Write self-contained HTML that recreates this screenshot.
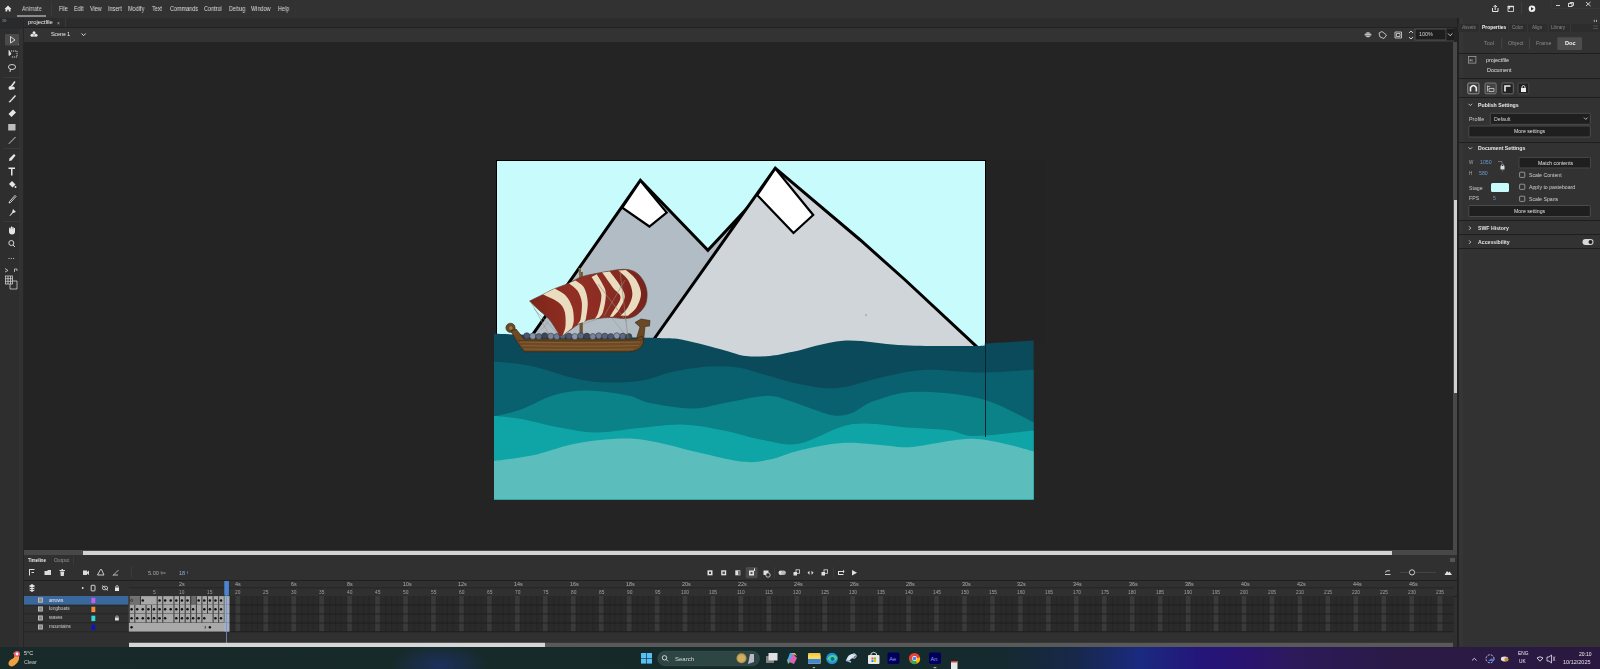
<!DOCTYPE html>
<html><head><meta charset="utf-8">
<style>
*{margin:0;padding:0;box-sizing:border-box}
html,body{width:1600px;height:669px;overflow:hidden;background:#232323;font-family:"Liberation Sans",sans-serif;color:#ddd}
.a{position:absolute}
.t{position:absolute;white-space:nowrap;line-height:1;color:#d8d8d8;will-change:transform}
svg{position:absolute;left:0;top:0;overflow:visible}
</style></head><body>
<div class="a" style="left:0px;top:0px;width:1600px;height:18px;background:#323232;"></div>
<div class="a" style="left:0px;top:18px;width:23px;height:629px;background:#2e2e2e;"></div>
<div class="a" style="left:19px;top:18px;width:4px;height:629px;background:#323232;"></div>
<div class="a" style="left:24px;top:18px;width:1434px;height:10px;background:#2c2c2c;"></div>
<div class="a" style="left:24px;top:27px;width:1434px;height:1px;background:#212121;"></div>
<div class="a" style="left:23px;top:18px;width:1px;height:629px;background:#262626;"></div>
<div class="a" style="left:24px;top:28px;width:1430px;height:14px;background:#333333;"></div>
<div class="a" style="left:24px;top:42px;width:1429px;height:508px;background:#242424;"></div>
<div class="a" style="left:1453px;top:42px;width:5px;height:508px;background:#484848;"></div>
<div class="a" style="left:1453.8px;top:200px;width:3.9px;height:193px;background:#d0d0d0;"></div>
<div class="a" style="left:24px;top:550px;width:1434px;height:5px;background:#484848;"></div>
<div class="a" style="left:83px;top:551px;width:1309px;height:4px;background:#d2d2d2;"></div>
<div class="a" style="left:24px;top:555px;width:1434px;height:92px;background:#303030;"></div>
<div class="a" style="left:1457px;top:18px;width:1.5px;height:629px;background:#222222;"></div>
<div class="a" style="left:1458.5px;top:18px;width:141.5px;height:629px;background:#323232;"></div>
<div class="a" style="left:1459px;top:18px;width:3.5px;height:629px;background:#353535;"></div>
<div class="a" style="left:0px;top:647px;width:1600px;height:22px;background:linear-gradient(90deg,#182a2a 0%,#152a28 40%,#142a2e 62.5%,#17284a 67.2%,#1a2a80 71.2%,#24157a 75%,#2a1470 78%,#2c1a5a 81%,#2a1a45 87.5%,#2a1840 100%);"></div>
<div class="a" style="left:380px;top:647px;width:120px;height:22px;background:radial-gradient(ellipse 50px 22px at 60px 18px,rgba(30,50,110,.75),rgba(30,50,110,0));"></div>
<svg width="1600" height="669"><path d="M4.5,9 L8,5.6 L11.5,9 L10.5,9 L10.5,11.5 L8.8,11.5 L8.8,9.8 L7.2,9.8 L7.2,11.5 L5.5,11.5 L5.5,9 Z" fill="#e6e6e6"/></svg>
<div class="a" style="left:17px;top:15px;width:29px;height:1.5px;background:#8a8a8a;"></div>
<div class="a" style="left:51px;top:2px;width:1px;height:14px;background:#3a3a3a;"></div>
<div class="a" style="left:295px;top:0px;width:1px;height:17px;background:#333;"></div>
<svg width="1600" height="669">
<g fill="none" stroke="#e8e8e8" stroke-width="1">
<path d="M1492.5,8 L1492.5,11.5 L1498,11.5 L1498,8"/>
<path d="M1495.2,10 L1495.2,5.5 M1493.5,7 L1495.2,5.3 L1497,7"/>
<rect x="1508" y="6.5" width="5.5" height="5" stroke-width="0.8"/>
</g>
<rect x="1507.8" y="5.8" width="6" height="1.4" fill="#e8e8e8"/><rect x="1508.5" y="7" width="1.3" height="2" fill="#e8e8e8"/>
<rect x="1521.3" y="2" width="0.8" height="12" fill="#444"/>
<circle cx="1532" cy="8.8" r="3.3" fill="#f0f0f0"/>
<path d="M1531,7 L1533.8,8.8 L1531,10.6 Z" fill="#2a2a2a"/>
<g stroke="#cfcfcf" stroke-width="1" fill="none">
<path d="M1556,5.5 L1560,5.5"/>
<rect x="1568.5" y="3.5" width="3.5" height="3"/>
<path d="M1570,3.5 L1570,2.5 L1573.5,2.5 L1573.5,5.5 L1572,5.5"/>
<path d="M1586,2 L1590.5,6 M1590.5,2 L1586,6"/>
</g>
<path d="M1551,0.5 L1551,8.5 L1600,8.5" fill="none" stroke="#3a3a3a" stroke-width="0.8"/>
</svg>
<div class="a" style="left:24px;top:18px;width:41px;height:9px;background:#2c2c2c;"></div>
<div class="a" style="left:65px;top:18px;width:1px;height:9px;background:#3a3a3a;"></div>
<svg width="1600" height="669">
<g fill="#e8e8e8">
<circle cx="34" cy="32.8" r="1.5"/><circle cx="32" cy="35.2" r="1.5"/><circle cx="36" cy="35.2" r="1.5"/>
<rect x="33.5" y="34" width="1" height="3"/>
</g>
<path d="M81.5,33.5 L83.6,35.6 L85.7,33.5" fill="none" stroke="#ddd" stroke-width="1"/>
</svg>
<svg width="1600" height="669">
<rect x="1415" y="29" width="31" height="11" fill="#1e1e1e" stroke="#5a5a5a" stroke-width="0.8"/>
<rect x="1446.4" y="29" width="7.6" height="11" fill="#1e1e1e"/>
<g stroke="#dcdcdc" stroke-width="0.9" fill="none">
<path d="M1364.5,34.7 L1371.5,34.7 M1368,32 L1368,37.5"/>
<path d="M1366,33 L1370,33 L1370,36.5 L1366,36.5 Z" stroke-width="0.7"/>
<path d="M1379,33 L1382,31.5 L1386.5,35 L1384,38.5 L1380,37 Z" stroke-width="0.8"/>
<path d="M1395,32 L1401.5,32 L1401.5,38 L1395,38 Z M1396.5,33.5 L1400,33.5 L1400,36.5 L1396.5,36.5 Z" stroke-width="0.8"/>
<path d="M1409,33 L1411,31 L1413,33 M1409,37 L1411,39 L1413,37"/>
<path d="M1448,33.5 L1450.2,35.7 L1452.4,33.5"/>
</g>
</svg>
<svg width="1600" height="669">
<rect x="0" y="18" width="23" height="11" fill="#282a2c"/><g fill="#d8d8d8">
<path d="M2.5,19 L4,20.5 L2.5,22 M4.5,19 L6,20.5 L4.5,22" stroke="#bbb" stroke-width="0.6" fill="none"/>
</g>
<rect x="5" y="34" width="14" height="11.5" rx="1" fill="#4a4a4a"/>
<path d="M10.5,36.5 L10.5,43 L15,40 Z" fill="none" stroke="#e0e0e0" stroke-width="0.9"/>
<path d="M18,44 L19,44 L19,45" fill="#aaa"/>
<g fill="none" stroke="#e0e0e0" stroke-width="0.9">
<path d="M9,50.5 L9,55.5 L11,54 Z" fill="#e0e0e0"/>
<path d="M11,51 L17,51 L17,57 L11,57" stroke-dasharray="1.2,0.8"/>
<ellipse cx="12" cy="67" rx="3.6" ry="2.5"/>
<path d="M10.5,69 L10,72"/>
<path d="M8.8,143.8 L15.5,137"/>
</g>
<rect x="3" y="77" width="17" height="0.8" fill="#3c3c3c"/>
<g fill="#e6e6e6">
<path d="M14.5,81 L15.5,82 L12,87 L10.5,86 Z"/><circle cx="10.5" cy="88" r="2"/><circle cx="13.2" cy="88" r="1.6"/>
<path d="M15,95 L16,96 L12,100.5 L11,99.5 Z"/><path d="M11,99.5 L12,100.5 L10,102.5 L8.5,102 Z"/>
<path d="M13,109.5 L16,112.5 L11.5,117 L8.5,114 Z"/>
<rect x="8.2" y="124" width="7.3" height="6.5" fill="#bdbdbd"/>
</g>
<rect x="3" y="148" width="17" height="0.8" fill="#3c3c3c"/>
<g fill="#e6e6e6">
<path d="M14,154 L15.5,155.5 L11.5,160.5 L9,161 L9.5,158.5 Z"/>
<path d="M8.5,167.5 L15,167.5 L15,169 L12.5,169 L12.5,175.5 L11,175.5 L11,169 L8.5,169 Z"/>
<path d="M9,184 L12,181 L15.5,184.5 L12.5,187.5 Z"/><circle cx="15.5" cy="187" r="1"/>
<path d="M15,195.5 L16,196.5 L10.5,202.5 L9,203 L9.5,201.5 Z" fill="none" stroke="#e6e6e6" stroke-width="0.9"/>
<path d="M13,209 L16,212 L13,213 L10,216 L9.5,215.5 L12,212.5 Z"/>
</g>
<rect x="3" y="221" width="17" height="0.8" fill="#3c3c3c"/>
<g fill="#e6e6e6">
<path d="M9,229 L9,231.5 Q9,234.5 12,234.5 Q15,234.5 15,231.5 L15,228 L14,228 L14,230 L13.5,227 L12.5,227 L12.5,230 L12,226.5 L11,226.5 L11,230 L10.5,227.5 L9.5,227.5 Z"/>
</g>
<g fill="none" stroke="#e6e6e6" stroke-width="0.9">
<circle cx="11.3" cy="243" r="2.5"/><path d="M13,245 L15,247"/>
</g>
<g fill="#d0d0d0"><circle cx="9" cy="258.5" r="0.6"/><circle cx="11.3" cy="258.5" r="0.6"/><circle cx="13.6" cy="258.5" r="0.6"/></g>
<g fill="none" stroke="#d0d0d0" stroke-width="0.8">
<path d="M5,268.5 L8,270.5 L5,272"/><path d="M14.5,272 L14.5,269 L17,269 L17,271"/>
<rect x="5.5" y="276" width="7" height="8"/><path d="M5.5,278.7 L12.5,278.7 M5.5,281.3 L12.5,281.3 M8,276 L8,284 M10.5,276 L10.5,284"/>
<path d="M10,284 L10,289 L17,289 L17,281 L12.5,281"/>
</g>
</svg>
<svg width="1600" height="669"><rect x="496" y="160" width="490" height="300" fill="#000"/><rect x="497" y="161" width="488" height="300" fill="#c8fbfc"/><polygon points="501,380 640.4,180.3 707.9,250.3 740.3,215.6 640,380" fill="#b1bcc4" stroke="#000" stroke-width="3" stroke-linejoin="miter" stroke-miterlimit="10"/><polygon points="622.3,207.6 640.4,180.8 666.7,212.5 649.4,226.5" fill="#fff" stroke="#000" stroke-width="2.2" stroke-linejoin="miter"/><polygon points="610.8,400 775.3,168.1 860.3,240 905.2,280 975.3,345.3 1004,372" fill="#d0d5da" stroke="#000" stroke-width="3" stroke-linejoin="miter" stroke-miterlimit="10"/><polygon points="757.3,195.2 775.3,168.6 813.2,215 793.5,233" fill="#fff" stroke="#000" stroke-width="2.2" stroke-linejoin="miter"/><rect x="865.5" y="314.5" width="1" height="1" fill="#555"/><rect x="986" y="160" width="60" height="190" fill="#232323"/><path d="M494.0,333.8 C505.0,334.1 533.0,334.8 560.0,335.5 C587.0,336.2 635.2,337.3 655.8,338.0 C676.4,338.7 672.0,337.8 683.5,339.9 C695.0,342.0 714.6,347.7 725.0,350.4 C735.4,353.1 738.5,355.1 746.0,356.0 C753.5,356.9 762.2,356.6 770.0,355.9 C777.8,355.2 780.8,354.3 793.0,351.8 C805.2,349.3 825.5,341.9 843.0,340.7 C860.5,339.5 881.8,344.0 898.0,344.9 C914.2,345.8 927.1,345.8 940.0,346.0 C952.9,346.2 968.1,346.1 975.6,346.0 C983.1,345.9 983.3,345.6 985.0,345.2 C986.7,344.8 981.8,344.1 986.0,343.6 C990.2,343.1 1002.1,342.5 1010.0,342.0 C1017.9,341.5 1029.7,340.7 1033.6,340.4  L1033.6,499.5 L494,499.5 Z" fill="#0b4a5a"/><path d="M494.0,361.5 C500.2,362.2 518.3,363.2 531.5,366.0 C544.7,368.8 560.6,375.2 573.0,378.0 C585.4,380.8 594.5,382.1 606.0,382.5 C617.5,382.9 631.0,382.2 642.0,380.5 C653.0,378.8 660.8,374.3 672.0,372.0 C683.2,369.7 698.0,367.3 709.0,366.6 C720.0,365.9 728.6,366.2 738.0,367.6 C747.4,369.0 754.9,372.2 765.5,375.0 C776.1,377.8 789.5,382.3 801.5,384.5 C813.5,386.7 823.6,389.3 837.4,388.0 C851.2,386.7 869.7,379.7 884.4,376.7 C899.1,373.7 909.7,370.5 925.8,369.8 C941.9,369.1 963.0,372.5 981.0,372.5 C999.0,372.5 1024.8,370.2 1033.6,369.8  L1033.6,499.5 L494,499.5 Z" fill="#09606f"/><path d="M494.0,416.5 C498.5,415.3 511.2,413.0 521.0,409.5 C530.8,406.0 541.8,398.7 552.8,395.5 C563.8,392.3 574.2,390.5 586.7,390.5 C599.2,390.5 617.5,393.4 628.0,395.5 C638.5,397.6 639.3,400.8 650.0,403.0 C660.7,405.2 679.7,408.5 692.0,408.5 C704.3,408.5 711.5,405.3 723.7,403.2 C736.0,401.1 754.5,396.3 765.5,395.9 C776.5,395.5 782.4,398.9 790.0,401.0 C797.6,403.1 803.7,406.1 811.0,408.5 C818.3,410.9 827.2,414.8 834.0,415.5 C840.8,416.2 845.4,415.4 852.0,413.0 C858.6,410.6 863.1,404.6 873.7,401.0 C884.3,397.4 897.6,392.1 915.5,391.7 C933.4,391.3 961.3,393.7 981.0,398.8 C1000.7,403.9 1024.8,418.4 1033.6,422.3  L1033.6,499.5 L494,499.5 Z" fill="#0a8287"/><path d="M494.0,415.8 C498.6,416.3 511.6,417.3 521.4,419.0 C531.2,420.7 540.6,423.9 552.8,426.2 C565.0,428.4 580.7,432.1 594.6,432.5 C608.5,432.9 621.9,429.6 636.4,428.3 C650.9,427.0 667.2,424.1 681.8,424.5 C696.3,424.9 709.8,427.7 723.7,430.4 C737.7,433.1 752.8,438.3 765.5,440.5 C778.2,442.7 785.5,446.2 800.0,443.5 C814.5,440.8 834.1,426.7 852.8,424.1 C871.5,421.5 895.8,426.8 912.0,427.8 C928.2,428.9 939.4,429.0 950.0,430.4 C960.6,431.8 961.7,436.0 975.6,436.0 C989.5,436.0 1023.9,431.5 1033.6,430.6  L1033.6,499.5 L494,499.5 Z" fill="#0fa5a7"/><path d="M494.0,461.0 C500.3,460.1 518.5,458.4 531.8,455.6 C545.1,452.8 559.8,446.8 573.7,444.0 C587.7,441.2 602.8,439.3 615.5,438.8 C628.2,438.3 635.5,438.5 650.0,440.9 C664.5,443.3 687.0,449.9 702.8,453.4 C718.6,456.9 733.4,460.8 744.6,461.8 C755.8,462.8 760.8,461.5 770.0,459.6 C779.2,457.7 788.0,453.1 800.0,450.3 C812.0,447.5 828.1,443.8 842.3,443.0 C856.5,442.2 873.4,444.8 885.0,445.5 C896.6,446.2 896.9,448.1 912.0,447.0 C927.1,445.9 955.3,438.2 975.6,438.9 C995.9,439.6 1023.9,449.2 1033.6,451.3  L1033.6,499.5 L494,499.5 Z" fill="#5bbebd"/><line x1="985.5" y1="344" x2="985.5" y2="437" stroke="#06262c" stroke-width="1"/><g><g stroke="#9a9a8a" stroke-width="0.6" fill="none"><path d="M531,302 L551,338 M534,309 L562,338 M541,330 L548,322 M583,324 L604,317 M611,317 L628,338"/></g><path d="M579.5,272 L582.8,272 L582.8,340 L579.5,340 Z" fill="#6a5232"/><path d="M578.5,268 L580.8,268 L581.5,278 L579.2,278Z" fill="#7a6a4a"/><path d="M636,340 L640,327 L635,322.5 L641,319 L650,320.5 L649.5,326 L645,326.5 L643.5,341 Z" fill="#6a4a26" stroke="#3a2410" stroke-width="0.6"/><circle cx="510.5" cy="327.8" r="4.6" fill="#6a4a26" stroke="#3a2410" stroke-width="0.6"/><circle cx="510.8" cy="328" r="1.8" fill="#9a7a50"/><path d="M511,331 L516,329 L524,339 L636,339 L642,336 L643.5,341 C643,347 639,351 629,351.8 L525,351.8 C521,349 515,339 511,331 Z" fill="#6e4a24" stroke="#3a2410" stroke-width="0.7"/><path d="M520,342 C560,343 600,343 640,342 M522,345.5 C560,346.5 600,346.5 639,345.5 M524,349 C560,349.8 600,349.8 634,349" stroke="#8e6a3e" stroke-width="0.7" fill="none"/><path d="M518,340.5 C560,341 610,341 642,340" stroke="#4a2e14" stroke-width="0.7" fill="none"/><circle cx="526.8" cy="335.8" r="3.1" fill="#4a5870" stroke="#2e3038" stroke-width="0.5"/><circle cx="532.8" cy="336.2" r="3.1" fill="#8a96a8" stroke="#2e3038" stroke-width="0.5"/><circle cx="538.8" cy="336.59999999999997" r="3.1" fill="#5a6a80" stroke="#2e3038" stroke-width="0.5"/><circle cx="544.8" cy="335.8" r="3.1" fill="#3e4656" stroke="#2e3038" stroke-width="0.5"/><circle cx="550.8" cy="336.2" r="3.1" fill="#7a8494" stroke="#2e3038" stroke-width="0.5"/><circle cx="556.8" cy="336.59999999999997" r="3.1" fill="#6d7c94" stroke="#2e3038" stroke-width="0.5"/><circle cx="562.8" cy="335.8" r="3.1" fill="#56647a" stroke="#2e3038" stroke-width="0.5"/><circle cx="568.8" cy="336.2" r="3.1" fill="#4a5870" stroke="#2e3038" stroke-width="0.5"/><circle cx="574.8" cy="336.59999999999997" r="3.1" fill="#8a96a8" stroke="#2e3038" stroke-width="0.5"/><circle cx="580.8" cy="335.8" r="3.1" fill="#5a6a80" stroke="#2e3038" stroke-width="0.5"/><circle cx="586.8" cy="336.2" r="3.1" fill="#3e4656" stroke="#2e3038" stroke-width="0.5"/><circle cx="592.8" cy="336.59999999999997" r="3.1" fill="#7a8494" stroke="#2e3038" stroke-width="0.5"/><circle cx="598.8" cy="335.8" r="3.1" fill="#6d7c94" stroke="#2e3038" stroke-width="0.5"/><circle cx="604.8" cy="336.2" r="3.1" fill="#56647a" stroke="#2e3038" stroke-width="0.5"/><circle cx="610.8" cy="336.59999999999997" r="3.1" fill="#4a5870" stroke="#2e3038" stroke-width="0.5"/><circle cx="616.8" cy="335.8" r="3.1" fill="#8a96a8" stroke="#2e3038" stroke-width="0.5"/><circle cx="622.8" cy="336.2" r="3.1" fill="#5a6a80" stroke="#2e3038" stroke-width="0.5"/><circle cx="628.8" cy="336.59999999999997" r="3.1" fill="#3e4656" stroke="#2e3038" stroke-width="0.5"/><defs><linearGradient id="sg" x1="0" y1="0" x2="1" y2="0"><stop offset="0" stop-color="#7c2419"/><stop offset="0.35" stop-color="#922f24"/><stop offset="0.7" stop-color="#8a2b22"/><stop offset="1" stop-color="#76231c"/></linearGradient></defs><path d="M529.6,301.0 C532.0,299.8 540.0,296.0 544.0,294.0 C548.0,292.0 549.6,290.8 553.8,289.0 C557.9,287.2 564.4,285.2 568.9,283.2 C573.4,281.2 576.5,278.6 581.0,277.0 C585.5,275.4 591.2,274.5 596.0,273.5 C600.8,272.5 606.0,271.7 610.0,271.0 C614.0,270.3 616.7,269.7 620.0,269.5 C623.3,269.3 627.0,269.2 630.0,270.0 C633.0,270.8 635.7,272.0 638.0,274.0 C640.3,276.0 642.5,279.0 644.0,282.0 C645.5,285.0 646.7,288.5 647.0,292.0 C647.3,295.5 647.0,299.8 646.0,303.0 C645.0,306.2 643.0,308.8 641.0,311.0 C639.0,313.2 636.7,315.2 634.0,316.5 C631.3,317.8 628.8,318.3 625.0,318.5 C621.2,318.7 615.7,317.5 611.0,317.5 C606.3,317.5 600.8,318.1 597.0,318.5 C593.2,318.9 591.4,318.9 588.3,319.8 C585.2,320.7 581.5,322.5 578.6,324.1 C575.7,325.7 574.0,327.5 571.0,329.5 C568.0,331.5 562.4,335.5 560.3,336.0 C558.1,336.5 559.9,335.4 558.1,332.7 C556.3,330.0 552.9,323.8 549.5,319.8 C546.1,315.9 539.7,310.8 537.7,309.0 Z" fill="url(#sg)" stroke="#5a4030" stroke-width="0.7"/><path d="M543.0,294.5 C545.5,295.8 554.4,299.2 558.0,302.0 C561.6,304.8 563.2,307.0 564.5,311.0 C565.8,315.0 565.8,321.9 565.5,326.0 C565.2,330.1 563.0,333.9 562.5,335.5  L572.0,328.0 C572.3,326.7 573.8,323.5 573.8,320.0 C573.8,316.5 573.6,311.1 572.2,307.0 C570.8,302.9 568.5,298.6 565.6,295.5 C562.7,292.4 556.6,289.7 554.8,288.5 Z" fill="#eadcbf"/><path d="M568.9,283.2 C570.3,284.5 575.4,287.6 577.5,290.8 C579.6,294.0 581.3,298.0 581.8,302.6 C582.3,307.2 581.4,315.1 580.7,318.7 C580.0,322.3 578.0,323.2 577.5,324.1  L584.0,322.0 C584.4,321.3 585.5,321.1 586.1,317.7 C586.7,314.3 588.1,306.5 587.7,301.5 C587.4,296.5 586.0,291.0 584.0,287.5 C582.0,284.0 576.8,281.7 575.4,280.5 Z" fill="#eadcbf"/><path d="M591.5,276.9 C592.9,279.2 598.5,287.1 600.1,290.9 C601.7,294.7 601.5,295.7 601.1,299.5 C600.7,303.3 599.0,310.3 597.9,313.5 C596.8,316.7 595.2,318.0 594.7,318.9  L599.0,317.8 C599.6,316.9 601.7,315.4 602.8,312.4 C603.9,309.3 605.1,303.4 605.5,299.5 C605.9,295.6 606.4,293.0 604.9,288.8 C603.4,284.6 598.1,276.6 596.8,274.2 Z" fill="#eadcbf"/><path d="M602.2,272.6 C604.0,275.1 610.0,283.6 613.0,287.7 C616.0,291.8 620.5,293.4 620.5,297.4 C620.5,301.3 614.8,308.2 613.0,311.4 C611.2,314.6 610.3,315.8 609.8,316.7  L613.0,316.7 C614.1,315.4 617.4,312.6 619.4,309.2 C621.4,305.8 624.8,300.4 624.8,296.3 C624.8,292.2 621.9,288.6 619.4,284.5 C616.9,280.4 611.4,273.7 609.8,271.5 Z" fill="#eadcbf"/><path d="M618.4,270.5 C620.0,272.1 625.8,276.2 628.1,280.1 C630.4,284.0 632.4,289.6 632.4,294.1 C632.4,298.6 630.1,303.5 628.1,307.1 C626.1,310.7 621.8,314.3 620.5,315.7  L628.1,315.7 C629.5,314.3 634.6,310.9 636.7,307.1 C638.9,303.3 641.2,297.8 641.0,293.1 C640.8,288.4 638.1,283.0 635.6,279.1 C633.1,275.2 627.5,271.4 625.9,269.9 Z" fill="#eadcbf"/><g stroke="#8a8a7a" stroke-width="0.6" fill="none"><path d="M598,284 L627,322 M625,280 L604,316 M620,271 L628,338"/></g></g></svg>
<div class="a" style="left:73px;top:556px;width:1px;height:9px;background:#3a3a3a;"></div>
<div class="a" style="left:131px;top:566px;width:0.6px;height:12px;background:#3a3a3a;"></div>
<div class="a" style="left:773.8px;top:567px;width:0.6px;height:11px;background:#3a3a3a;"></div>
<div class="a" style="left:832.9px;top:567px;width:0.6px;height:11px;background:#3a3a3a;"></div>
<div class="a" style="left:24px;top:580px;width:1433px;height:0.8px;background:#1f1f1f;"></div>
<div class="a" style="left:24px;top:595.5px;width:1433px;height:0.8px;background:#1f1f1f;"></div>
<div class="a" style="left:24.4px;top:596.1px;width:104px;height:8.6px;background:#3a679c;"></div>
<svg width="1600" height="669"><g fill="#dcdcdc" stroke="none">
<path d="M29,569 L30,569 L30,575.5 L29,575.5 Z M29,569 L34.5,569 L34.5,570 L29,570 Z M31.5,572 L34,572 L34,573 L31.5,573Z"/>
<path d="M44.5,571 L47,571 L48,570 L51,570 L51,575 L44.5,575 Z"/>
<path d="M59.5,570 L65,570 L65,571 L59.5,571Z M60.3,571.5 L64.2,571.5 L63.8,576 L60.7,576Z M61.5,569 L63,569 L63,570 L61.5,570Z"/>
<path d="M83,570.5 L87,570.5 L87,572 L89,570.5 L89,575 L87,573.5 L87,575 L83,575Z"/>
<path d="M100.5,569.5 L101.5,569.5 L104,575 L97.5,575 Z" fill="none" stroke="#dcdcdc" stroke-width="0.9"/>
<path d="M113,575.5 L118.5,570" stroke="#bbb" stroke-width="0.9" fill="none"/>
<rect x="113" y="574.5" width="5" height="1" fill="#bbb"/>
</g><rect x="745.7" y="567" width="11.8" height="11.3" rx="1.5" fill="#4a4a4a"/><g fill="#e0e0e0">
<rect x="707.5" y="570.3" width="5" height="5"/><rect x="709" y="571.8" width="2" height="2" fill="#333"/>
<rect x="721.2" y="570.3" width="5" height="5"/><rect x="722.5" y="571.6" width="2.4" height="2.4" fill="#555"/>
<rect x="735.3" y="570.3" width="5" height="5"/><rect x="738" y="570.8" width="2" height="4" fill="#777"/>
<rect x="749" y="570.5" width="5" height="5"/><rect x="750.5" y="572" width="2" height="2" fill="#555"/><path d="M754,568.5 L755,568 L755,571 L754,571Z"/>
<rect x="763.5" y="570.5" width="5" height="4.5"/><circle cx="768" cy="575" r="2.2" fill="#2c2c2c" stroke="#e0e0e0" stroke-width="0.8"/>
<ellipse cx="781" cy="572.7" rx="2.5" ry="2.3"/><ellipse cx="783.4" cy="572.7" rx="2.5" ry="2.3" fill="#bbb"/>
<rect x="793.5" y="572" width="3.5" height="3.5"/><rect x="796" y="569.8" width="3.5" height="3.5" fill="none" stroke="#e0e0e0" stroke-width="0.8"/>
<path d="M807.5,572.7 L809.5,570.7 L809.5,574.7 Z M813.5,572.7 L811.5,570.7 L811.5,574.7Z"/>
<rect x="821.5" y="572" width="3.5" height="3.5"/><rect x="824" y="569.8" width="3.5" height="3.5" fill="none" stroke="#e0e0e0" stroke-width="0.8"/>
<path d="M838,575 L838,571 L843,571 L843,569.5 L844.5,571.5 L843,573.5 L843,572 L839,572 L839,574 L843.5,574 L843.5,575 Z"/>
<path d="M852,570 L857,572.7 L852,575.4 Z"/>
</g><g fill="none" stroke="#dcdcdc" stroke-width="0.9">
<path d="M1385,574.5 L1390.5,574.5 M1385.5,572.5 L1386.5,570.8 L1390,570.8"/>
<line x1="1400" y1="572.4" x2="1436" y2="572.4" stroke="#555" stroke-width="0.6"/>
<circle cx="1412" cy="572.4" r="2.6" fill="#2c2c2c"/>
</g>
<path d="M1444.5,575 L1447,571 L1448.5,572.8 L1449.5,571.5 L1452,575Z" fill="#e0e0e0"/>
<rect x="1450" y="558" width="5" height="4" fill="#555"/><g fill="#e8e8e8">
<path d="M29.5,586 L32,584.5 L34.5,586 L32,587.5Z M29.5,588 L32,589.5 L34.5,588 M29.5,590 L32,591.5 L34.5,590" stroke="#e8e8e8" stroke-width="0.8"/>
<circle cx="82.7" cy="588" r="0.9"/>
<rect x="91.2" y="585.3" width="3.8" height="5.6" rx="0.6" fill="none" stroke="#e8e8e8" stroke-width="0.9"/>
<ellipse cx="105" cy="588" rx="2.8" ry="1.8" fill="none" stroke="#d8d8d8" stroke-width="0.8"/><path d="M102,585.5 L108,590.5" stroke="#d8d8d8" stroke-width="0.8"/>
<rect x="115" y="587.5" width="4" height="3.5"/><path d="M115.8,587.5 L115.8,586.3 Q117,584.7 118.2,586.3 L118.2,587.5" fill="none" stroke="#e8e8e8" stroke-width="0.8"/>
</g><rect x="128.8" y="587.6" width="1324.6000000000001" height="0.6" fill="#1f1f1f"/><rect x="128.80" y="588" width="0.6" height="7.5" fill="#3b3b3b"/><rect x="156.75" y="588" width="0.6" height="7.5" fill="#3b3b3b"/><rect x="184.70" y="588" width="0.6" height="7.5" fill="#3b3b3b"/><rect x="212.65" y="588" width="0.6" height="7.5" fill="#3b3b3b"/><rect x="240.60" y="588" width="0.6" height="7.5" fill="#3b3b3b"/><rect x="268.55" y="588" width="0.6" height="7.5" fill="#3b3b3b"/><rect x="296.50" y="588" width="0.6" height="7.5" fill="#3b3b3b"/><rect x="324.45" y="588" width="0.6" height="7.5" fill="#3b3b3b"/><rect x="352.40" y="588" width="0.6" height="7.5" fill="#3b3b3b"/><rect x="380.35" y="588" width="0.6" height="7.5" fill="#3b3b3b"/><rect x="408.30" y="588" width="0.6" height="7.5" fill="#3b3b3b"/><rect x="436.25" y="588" width="0.6" height="7.5" fill="#3b3b3b"/><rect x="464.20" y="588" width="0.6" height="7.5" fill="#3b3b3b"/><rect x="492.15" y="588" width="0.6" height="7.5" fill="#3b3b3b"/><rect x="520.10" y="588" width="0.6" height="7.5" fill="#3b3b3b"/><rect x="548.05" y="588" width="0.6" height="7.5" fill="#3b3b3b"/><rect x="576.00" y="588" width="0.6" height="7.5" fill="#3b3b3b"/><rect x="603.95" y="588" width="0.6" height="7.5" fill="#3b3b3b"/><rect x="631.90" y="588" width="0.6" height="7.5" fill="#3b3b3b"/><rect x="659.85" y="588" width="0.6" height="7.5" fill="#3b3b3b"/><rect x="687.80" y="588" width="0.6" height="7.5" fill="#3b3b3b"/><rect x="715.75" y="588" width="0.6" height="7.5" fill="#3b3b3b"/><rect x="743.70" y="588" width="0.6" height="7.5" fill="#3b3b3b"/><rect x="771.65" y="588" width="0.6" height="7.5" fill="#3b3b3b"/><rect x="799.60" y="588" width="0.6" height="7.5" fill="#3b3b3b"/><rect x="827.55" y="588" width="0.6" height="7.5" fill="#3b3b3b"/><rect x="855.50" y="588" width="0.6" height="7.5" fill="#3b3b3b"/><rect x="883.45" y="588" width="0.6" height="7.5" fill="#3b3b3b"/><rect x="911.40" y="588" width="0.6" height="7.5" fill="#3b3b3b"/><rect x="939.35" y="588" width="0.6" height="7.5" fill="#3b3b3b"/><rect x="967.30" y="588" width="0.6" height="7.5" fill="#3b3b3b"/><rect x="995.25" y="588" width="0.6" height="7.5" fill="#3b3b3b"/><rect x="1023.20" y="588" width="0.6" height="7.5" fill="#3b3b3b"/><rect x="1051.15" y="588" width="0.6" height="7.5" fill="#3b3b3b"/><rect x="1079.10" y="588" width="0.6" height="7.5" fill="#3b3b3b"/><rect x="1107.05" y="588" width="0.6" height="7.5" fill="#3b3b3b"/><rect x="1135.00" y="588" width="0.6" height="7.5" fill="#3b3b3b"/><rect x="1162.95" y="588" width="0.6" height="7.5" fill="#3b3b3b"/><rect x="1190.90" y="588" width="0.6" height="7.5" fill="#3b3b3b"/><rect x="1218.85" y="588" width="0.6" height="7.5" fill="#3b3b3b"/><rect x="1246.80" y="588" width="0.6" height="7.5" fill="#3b3b3b"/><rect x="1274.75" y="588" width="0.6" height="7.5" fill="#3b3b3b"/><rect x="1302.70" y="588" width="0.6" height="7.5" fill="#3b3b3b"/><rect x="1330.65" y="588" width="0.6" height="7.5" fill="#3b3b3b"/><rect x="1358.60" y="588" width="0.6" height="7.5" fill="#3b3b3b"/><rect x="1386.55" y="588" width="0.6" height="7.5" fill="#3b3b3b"/><rect x="1414.50" y="588" width="0.6" height="7.5" fill="#3b3b3b"/><rect x="38" y="597.6" width="4.8" height="5" fill="#c8c8c8"/><rect x="38.8" y="598.4" width="3.2" height="3.4" fill="#888"/><rect x="91.4" y="597.8000000000001" width="3.9" height="5.4" fill="#c85ee8"/><rect x="24" y="604.7" width="105" height="0.6" fill="#1f1f1f"/><rect x="38" y="606.5" width="4.8" height="5" fill="#c8c8c8"/><rect x="38.8" y="607.3" width="3.2" height="3.4" fill="#888"/><rect x="91.4" y="606.7" width="3.9" height="5.4" fill="#f08c3a"/><rect x="24" y="613.6" width="105" height="0.6" fill="#1f1f1f"/><rect x="38" y="615.5" width="4.8" height="5" fill="#c8c8c8"/><rect x="38.8" y="616.3" width="3.2" height="3.4" fill="#888"/><rect x="91.4" y="615.7" width="3.9" height="5.4" fill="#32d6de"/><rect x="24" y="622.6" width="105" height="0.6" fill="#1f1f1f"/><rect x="38" y="624.5" width="4.8" height="5" fill="#c8c8c8"/><rect x="38.8" y="625.3" width="3.2" height="3.4" fill="#888"/><rect x="91.4" y="624.7" width="3.9" height="5.4" fill="#1414b4"/><rect x="24" y="631.6" width="105" height="0.6" fill="#1f1f1f"/><rect x="115" y="617.5" width="3.8" height="3" fill="#ddd"/><path d="M115.8,617.5 L115.8,616.5 Q117,615 118.2,616.5 L118.2,617.5" fill="none" stroke="#ddd" stroke-width="0.7"/><rect x="128.8" y="596" width="1324.6000000000001" height="35.6" fill="#2a2a2a"/><rect x="151.16" y="596" width="5.59" height="35.6" fill="#3a3a3a"/><rect x="179.11" y="596" width="5.59" height="35.6" fill="#3a3a3a"/><rect x="207.06" y="596" width="5.59" height="35.6" fill="#3a3a3a"/><rect x="235.01" y="596" width="5.59" height="35.6" fill="#3a3a3a"/><rect x="262.96" y="596" width="5.59" height="35.6" fill="#3a3a3a"/><rect x="290.91" y="596" width="5.59" height="35.6" fill="#3a3a3a"/><rect x="318.86" y="596" width="5.59" height="35.6" fill="#3a3a3a"/><rect x="346.81" y="596" width="5.59" height="35.6" fill="#3a3a3a"/><rect x="374.76" y="596" width="5.59" height="35.6" fill="#3a3a3a"/><rect x="402.71" y="596" width="5.59" height="35.6" fill="#3a3a3a"/><rect x="430.66" y="596" width="5.59" height="35.6" fill="#3a3a3a"/><rect x="458.61" y="596" width="5.59" height="35.6" fill="#3a3a3a"/><rect x="486.56" y="596" width="5.59" height="35.6" fill="#3a3a3a"/><rect x="514.51" y="596" width="5.59" height="35.6" fill="#3a3a3a"/><rect x="542.46" y="596" width="5.59" height="35.6" fill="#3a3a3a"/><rect x="570.41" y="596" width="5.59" height="35.6" fill="#3a3a3a"/><rect x="598.36" y="596" width="5.59" height="35.6" fill="#3a3a3a"/><rect x="626.31" y="596" width="5.59" height="35.6" fill="#3a3a3a"/><rect x="654.26" y="596" width="5.59" height="35.6" fill="#3a3a3a"/><rect x="682.21" y="596" width="5.59" height="35.6" fill="#3a3a3a"/><rect x="710.16" y="596" width="5.59" height="35.6" fill="#3a3a3a"/><rect x="738.11" y="596" width="5.59" height="35.6" fill="#3a3a3a"/><rect x="766.06" y="596" width="5.59" height="35.6" fill="#3a3a3a"/><rect x="794.01" y="596" width="5.59" height="35.6" fill="#3a3a3a"/><rect x="821.96" y="596" width="5.59" height="35.6" fill="#3a3a3a"/><rect x="849.91" y="596" width="5.59" height="35.6" fill="#3a3a3a"/><rect x="877.86" y="596" width="5.59" height="35.6" fill="#3a3a3a"/><rect x="905.81" y="596" width="5.59" height="35.6" fill="#3a3a3a"/><rect x="933.76" y="596" width="5.59" height="35.6" fill="#3a3a3a"/><rect x="961.71" y="596" width="5.59" height="35.6" fill="#3a3a3a"/><rect x="989.66" y="596" width="5.59" height="35.6" fill="#3a3a3a"/><rect x="1017.61" y="596" width="5.59" height="35.6" fill="#3a3a3a"/><rect x="1045.56" y="596" width="5.59" height="35.6" fill="#3a3a3a"/><rect x="1073.51" y="596" width="5.59" height="35.6" fill="#3a3a3a"/><rect x="1101.46" y="596" width="5.59" height="35.6" fill="#3a3a3a"/><rect x="1129.41" y="596" width="5.59" height="35.6" fill="#3a3a3a"/><rect x="1157.36" y="596" width="5.59" height="35.6" fill="#3a3a3a"/><rect x="1185.31" y="596" width="5.59" height="35.6" fill="#3a3a3a"/><rect x="1213.26" y="596" width="5.59" height="35.6" fill="#3a3a3a"/><rect x="1241.21" y="596" width="5.59" height="35.6" fill="#3a3a3a"/><rect x="1269.16" y="596" width="5.59" height="35.6" fill="#3a3a3a"/><rect x="1297.11" y="596" width="5.59" height="35.6" fill="#3a3a3a"/><rect x="1325.06" y="596" width="5.59" height="35.6" fill="#3a3a3a"/><rect x="1353.01" y="596" width="5.59" height="35.6" fill="#3a3a3a"/><rect x="1380.96" y="596" width="5.59" height="35.6" fill="#3a3a3a"/><rect x="1408.91" y="596" width="5.59" height="35.6" fill="#3a3a3a"/><rect x="1436.86" y="596" width="5.59" height="35.6" fill="#3a3a3a"/><path d="M128.80,596 L128.80,631.6 M134.39,596 L134.39,631.6 M139.98,596 L139.98,631.6 M145.57,596 L145.57,631.6 M151.16,596 L151.16,631.6 M156.75,596 L156.75,631.6 M162.34,596 L162.34,631.6 M167.93,596 L167.93,631.6 M173.52,596 L173.52,631.6 M179.11,596 L179.11,631.6 M184.70,596 L184.70,631.6 M190.29,596 L190.29,631.6 M195.88,596 L195.88,631.6 M201.47,596 L201.47,631.6 M207.06,596 L207.06,631.6 M212.65,596 L212.65,631.6 M218.24,596 L218.24,631.6 M223.83,596 L223.83,631.6 M229.42,596 L229.42,631.6 M235.01,596 L235.01,631.6 M240.60,596 L240.60,631.6 M246.19,596 L246.19,631.6 M251.78,596 L251.78,631.6 M257.37,596 L257.37,631.6 M262.96,596 L262.96,631.6 M268.55,596 L268.55,631.6 M274.14,596 L274.14,631.6 M279.73,596 L279.73,631.6 M285.32,596 L285.32,631.6 M290.91,596 L290.91,631.6 M296.50,596 L296.50,631.6 M302.09,596 L302.09,631.6 M307.68,596 L307.68,631.6 M313.27,596 L313.27,631.6 M318.86,596 L318.86,631.6 M324.45,596 L324.45,631.6 M330.04,596 L330.04,631.6 M335.63,596 L335.63,631.6 M341.22,596 L341.22,631.6 M346.81,596 L346.81,631.6 M352.40,596 L352.40,631.6 M357.99,596 L357.99,631.6 M363.58,596 L363.58,631.6 M369.17,596 L369.17,631.6 M374.76,596 L374.76,631.6 M380.35,596 L380.35,631.6 M385.94,596 L385.94,631.6 M391.53,596 L391.53,631.6 M397.12,596 L397.12,631.6 M402.71,596 L402.71,631.6 M408.30,596 L408.30,631.6 M413.89,596 L413.89,631.6 M419.48,596 L419.48,631.6 M425.07,596 L425.07,631.6 M430.66,596 L430.66,631.6 M436.25,596 L436.25,631.6 M441.84,596 L441.84,631.6 M447.43,596 L447.43,631.6 M453.02,596 L453.02,631.6 M458.61,596 L458.61,631.6 M464.20,596 L464.20,631.6 M469.79,596 L469.79,631.6 M475.38,596 L475.38,631.6 M480.97,596 L480.97,631.6 M486.56,596 L486.56,631.6 M492.15,596 L492.15,631.6 M497.74,596 L497.74,631.6 M503.33,596 L503.33,631.6 M508.92,596 L508.92,631.6 M514.51,596 L514.51,631.6 M520.10,596 L520.10,631.6 M525.69,596 L525.69,631.6 M531.28,596 L531.28,631.6 M536.87,596 L536.87,631.6 M542.46,596 L542.46,631.6 M548.05,596 L548.05,631.6 M553.64,596 L553.64,631.6 M559.23,596 L559.23,631.6 M564.82,596 L564.82,631.6 M570.41,596 L570.41,631.6 M576.00,596 L576.00,631.6 M581.59,596 L581.59,631.6 M587.18,596 L587.18,631.6 M592.77,596 L592.77,631.6 M598.36,596 L598.36,631.6 M603.95,596 L603.95,631.6 M609.54,596 L609.54,631.6 M615.13,596 L615.13,631.6 M620.72,596 L620.72,631.6 M626.31,596 L626.31,631.6 M631.90,596 L631.90,631.6 M637.49,596 L637.49,631.6 M643.08,596 L643.08,631.6 M648.67,596 L648.67,631.6 M654.26,596 L654.26,631.6 M659.85,596 L659.85,631.6 M665.44,596 L665.44,631.6 M671.03,596 L671.03,631.6 M676.62,596 L676.62,631.6 M682.21,596 L682.21,631.6 M687.80,596 L687.80,631.6 M693.39,596 L693.39,631.6 M698.98,596 L698.98,631.6 M704.57,596 L704.57,631.6 M710.16,596 L710.16,631.6 M715.75,596 L715.75,631.6 M721.34,596 L721.34,631.6 M726.93,596 L726.93,631.6 M732.52,596 L732.52,631.6 M738.11,596 L738.11,631.6 M743.70,596 L743.70,631.6 M749.29,596 L749.29,631.6 M754.88,596 L754.88,631.6 M760.47,596 L760.47,631.6 M766.06,596 L766.06,631.6 M771.65,596 L771.65,631.6 M777.24,596 L777.24,631.6 M782.83,596 L782.83,631.6 M788.42,596 L788.42,631.6 M794.01,596 L794.01,631.6 M799.60,596 L799.60,631.6 M805.19,596 L805.19,631.6 M810.78,596 L810.78,631.6 M816.37,596 L816.37,631.6 M821.96,596 L821.96,631.6 M827.55,596 L827.55,631.6 M833.14,596 L833.14,631.6 M838.73,596 L838.73,631.6 M844.32,596 L844.32,631.6 M849.91,596 L849.91,631.6 M855.50,596 L855.50,631.6 M861.09,596 L861.09,631.6 M866.68,596 L866.68,631.6 M872.27,596 L872.27,631.6 M877.86,596 L877.86,631.6 M883.45,596 L883.45,631.6 M889.04,596 L889.04,631.6 M894.63,596 L894.63,631.6 M900.22,596 L900.22,631.6 M905.81,596 L905.81,631.6 M911.40,596 L911.40,631.6 M916.99,596 L916.99,631.6 M922.58,596 L922.58,631.6 M928.17,596 L928.17,631.6 M933.76,596 L933.76,631.6 M939.35,596 L939.35,631.6 M944.94,596 L944.94,631.6 M950.53,596 L950.53,631.6 M956.12,596 L956.12,631.6 M961.71,596 L961.71,631.6 M967.30,596 L967.30,631.6 M972.89,596 L972.89,631.6 M978.48,596 L978.48,631.6 M984.07,596 L984.07,631.6 M989.66,596 L989.66,631.6 M995.25,596 L995.25,631.6 M1000.84,596 L1000.84,631.6 M1006.43,596 L1006.43,631.6 M1012.02,596 L1012.02,631.6 M1017.61,596 L1017.61,631.6 M1023.20,596 L1023.20,631.6 M1028.79,596 L1028.79,631.6 M1034.38,596 L1034.38,631.6 M1039.97,596 L1039.97,631.6 M1045.56,596 L1045.56,631.6 M1051.15,596 L1051.15,631.6 M1056.74,596 L1056.74,631.6 M1062.33,596 L1062.33,631.6 M1067.92,596 L1067.92,631.6 M1073.51,596 L1073.51,631.6 M1079.10,596 L1079.10,631.6 M1084.69,596 L1084.69,631.6 M1090.28,596 L1090.28,631.6 M1095.87,596 L1095.87,631.6 M1101.46,596 L1101.46,631.6 M1107.05,596 L1107.05,631.6 M1112.64,596 L1112.64,631.6 M1118.23,596 L1118.23,631.6 M1123.82,596 L1123.82,631.6 M1129.41,596 L1129.41,631.6 M1135.00,596 L1135.00,631.6 M1140.59,596 L1140.59,631.6 M1146.18,596 L1146.18,631.6 M1151.77,596 L1151.77,631.6 M1157.36,596 L1157.36,631.6 M1162.95,596 L1162.95,631.6 M1168.54,596 L1168.54,631.6 M1174.13,596 L1174.13,631.6 M1179.72,596 L1179.72,631.6 M1185.31,596 L1185.31,631.6 M1190.90,596 L1190.90,631.6 M1196.49,596 L1196.49,631.6 M1202.08,596 L1202.08,631.6 M1207.67,596 L1207.67,631.6 M1213.26,596 L1213.26,631.6 M1218.85,596 L1218.85,631.6 M1224.44,596 L1224.44,631.6 M1230.03,596 L1230.03,631.6 M1235.62,596 L1235.62,631.6 M1241.21,596 L1241.21,631.6 M1246.80,596 L1246.80,631.6 M1252.39,596 L1252.39,631.6 M1257.98,596 L1257.98,631.6 M1263.57,596 L1263.57,631.6 M1269.16,596 L1269.16,631.6 M1274.75,596 L1274.75,631.6 M1280.34,596 L1280.34,631.6 M1285.93,596 L1285.93,631.6 M1291.52,596 L1291.52,631.6 M1297.11,596 L1297.11,631.6 M1302.70,596 L1302.70,631.6 M1308.29,596 L1308.29,631.6 M1313.88,596 L1313.88,631.6 M1319.47,596 L1319.47,631.6 M1325.06,596 L1325.06,631.6 M1330.65,596 L1330.65,631.6 M1336.24,596 L1336.24,631.6 M1341.83,596 L1341.83,631.6 M1347.42,596 L1347.42,631.6 M1353.01,596 L1353.01,631.6 M1358.60,596 L1358.60,631.6 M1364.19,596 L1364.19,631.6 M1369.78,596 L1369.78,631.6 M1375.37,596 L1375.37,631.6 M1380.96,596 L1380.96,631.6 M1386.55,596 L1386.55,631.6 M1392.14,596 L1392.14,631.6 M1397.73,596 L1397.73,631.6 M1403.32,596 L1403.32,631.6 M1408.91,596 L1408.91,631.6 M1414.50,596 L1414.50,631.6 M1420.09,596 L1420.09,631.6 M1425.68,596 L1425.68,631.6 M1431.27,596 L1431.27,631.6 M1436.86,596 L1436.86,631.6" stroke="#222" stroke-width="0.5" fill="none"/><rect x="128.8" y="604.6" width="1324.6000000000001" height="0.8" fill="#1c1c1c"/><rect x="128.8" y="613.6" width="1324.6000000000001" height="0.8" fill="#1c1c1c"/><rect x="128.8" y="622.6" width="1324.6000000000001" height="0.8" fill="#1c1c1c"/><rect x="128.8" y="631.4" width="1324.6000000000001" height="0.8" fill="#1c1c1c"/><rect x="128.8" y="596.1" width="100.62" height="8.6" fill="#a9a9a9"/><rect x="128.8" y="605" width="100.62" height="8.6" fill="#a9a9a9"/><rect x="128.8" y="614" width="100.62" height="8.6" fill="#a9a9a9"/><rect x="128.8" y="623" width="100.62" height="8.6" fill="#a9a9a9"/><rect x="128.8" y="596.1" width="11.18" height="8.6" fill="#707070"/><rect x="190.29" y="596.1" width="5.59" height="8.6" fill="#6a6a6a"/><rect x="128.80" y="596.1" width="0.9" height="8.6" fill="#2a2a2a"/><rect x="139.98" y="596.1" width="0.9" height="8.6" fill="#2a2a2a"/><rect x="156.75" y="596.1" width="0.9" height="8.6" fill="#2a2a2a"/><rect x="162.34" y="596.1" width="0.9" height="8.6" fill="#2a2a2a"/><rect x="173.52" y="596.1" width="0.9" height="8.6" fill="#2a2a2a"/><rect x="179.11" y="596.1" width="0.9" height="8.6" fill="#2a2a2a"/><rect x="184.70" y="596.1" width="0.9" height="8.6" fill="#2a2a2a"/><rect x="190.29" y="596.1" width="0.9" height="8.6" fill="#2a2a2a"/><rect x="195.88" y="596.1" width="0.9" height="8.6" fill="#2a2a2a"/><rect x="201.47" y="596.1" width="0.9" height="8.6" fill="#2a2a2a"/><rect x="207.06" y="596.1" width="0.9" height="8.6" fill="#2a2a2a"/><rect x="212.65" y="596.1" width="0.9" height="8.6" fill="#2a2a2a"/><rect x="218.24" y="596.1" width="0.9" height="8.6" fill="#2a2a2a"/><rect x="223.83" y="596.1" width="0.9" height="8.6" fill="#2a2a2a"/><circle cx="142.78" cy="600.40" r="1.25" fill="#111"/><circle cx="159.55" cy="600.40" r="1.25" fill="#111"/><circle cx="165.14" cy="600.40" r="1.25" fill="#111"/><circle cx="170.73" cy="600.40" r="1.25" fill="#111"/><circle cx="176.31" cy="600.40" r="1.25" fill="#111"/><circle cx="181.91" cy="600.40" r="1.25" fill="#111"/><circle cx="187.50" cy="600.40" r="1.25" fill="#111"/><circle cx="198.68" cy="600.40" r="1.25" fill="#111"/><circle cx="204.27" cy="600.40" r="1.25" fill="#111"/><circle cx="209.86" cy="600.40" r="1.25" fill="#111"/><circle cx="215.44" cy="600.40" r="1.25" fill="#111"/><circle cx="221.04" cy="600.40" r="1.25" fill="#111"/><rect x="128.80" y="605" width="0.9" height="8.6" fill="#2a2a2a"/><rect x="134.39" y="605" width="0.9" height="8.6" fill="#2a2a2a"/><rect x="145.57" y="605" width="0.9" height="8.6" fill="#2a2a2a"/><rect x="151.16" y="605" width="0.9" height="8.6" fill="#2a2a2a"/><rect x="156.75" y="605" width="0.9" height="8.6" fill="#2a2a2a"/><rect x="162.34" y="605" width="0.9" height="8.6" fill="#2a2a2a"/><rect x="173.52" y="605" width="0.9" height="8.6" fill="#2a2a2a"/><rect x="179.11" y="605" width="0.9" height="8.6" fill="#2a2a2a"/><rect x="184.70" y="605" width="0.9" height="8.6" fill="#2a2a2a"/><rect x="190.29" y="605" width="0.9" height="8.6" fill="#2a2a2a"/><rect x="195.88" y="605" width="0.9" height="8.6" fill="#2a2a2a"/><rect x="201.47" y="605" width="0.9" height="8.6" fill="#2a2a2a"/><rect x="207.06" y="605" width="0.9" height="8.6" fill="#2a2a2a"/><rect x="212.65" y="605" width="0.9" height="8.6" fill="#2a2a2a"/><rect x="218.24" y="605" width="0.9" height="8.6" fill="#2a2a2a"/><rect x="223.83" y="605" width="0.9" height="8.6" fill="#2a2a2a"/><circle cx="131.59" cy="609.30" r="1.25" fill="#111"/><circle cx="137.19" cy="609.30" r="1.25" fill="#111"/><circle cx="142.78" cy="609.30" r="1.25" fill="#111"/><circle cx="148.37" cy="609.30" r="1.25" fill="#111"/><circle cx="153.96" cy="609.30" r="1.25" fill="#111"/><circle cx="159.55" cy="609.30" r="1.25" fill="#111"/><circle cx="165.14" cy="609.30" r="1.25" fill="#111"/><circle cx="170.73" cy="609.30" r="1.25" fill="#111"/><circle cx="176.31" cy="609.30" r="1.25" fill="#111"/><circle cx="181.91" cy="609.30" r="1.25" fill="#111"/><circle cx="187.50" cy="609.30" r="1.25" fill="#111"/><circle cx="193.09" cy="609.30" r="1.25" fill="#111"/><circle cx="204.27" cy="609.30" r="1.25" fill="#111"/><circle cx="209.86" cy="609.30" r="1.25" fill="#111"/><circle cx="215.44" cy="609.30" r="1.25" fill="#111"/><circle cx="221.04" cy="609.30" r="1.25" fill="#111"/><rect x="128.80" y="614" width="0.9" height="8.6" fill="#2a2a2a"/><rect x="134.39" y="614" width="0.9" height="8.6" fill="#2a2a2a"/><rect x="145.57" y="614" width="0.9" height="8.6" fill="#2a2a2a"/><rect x="151.16" y="614" width="0.9" height="8.6" fill="#2a2a2a"/><rect x="156.75" y="614" width="0.9" height="8.6" fill="#2a2a2a"/><rect x="162.34" y="614" width="0.9" height="8.6" fill="#2a2a2a"/><rect x="173.52" y="614" width="0.9" height="8.6" fill="#2a2a2a"/><rect x="179.11" y="614" width="0.9" height="8.6" fill="#2a2a2a"/><rect x="184.70" y="614" width="0.9" height="8.6" fill="#2a2a2a"/><rect x="190.29" y="614" width="0.9" height="8.6" fill="#2a2a2a"/><rect x="195.88" y="614" width="0.9" height="8.6" fill="#2a2a2a"/><rect x="201.47" y="614" width="0.9" height="8.6" fill="#2a2a2a"/><rect x="212.65" y="614" width="0.9" height="8.6" fill="#2a2a2a"/><rect x="218.24" y="614" width="0.9" height="8.6" fill="#2a2a2a"/><rect x="223.83" y="614" width="0.9" height="8.6" fill="#2a2a2a"/><circle cx="131.59" cy="618.30" r="1.25" fill="#111"/><circle cx="137.19" cy="618.30" r="1.25" fill="#111"/><circle cx="142.78" cy="618.30" r="1.25" fill="#111"/><circle cx="148.37" cy="618.30" r="1.25" fill="#111"/><circle cx="153.96" cy="618.30" r="1.25" fill="#111"/><circle cx="159.55" cy="618.30" r="1.25" fill="#111"/><circle cx="165.14" cy="618.30" r="1.25" fill="#111"/><circle cx="176.31" cy="618.30" r="1.25" fill="#111"/><circle cx="181.91" cy="618.30" r="1.25" fill="#111"/><circle cx="187.50" cy="618.30" r="1.25" fill="#111"/><circle cx="193.09" cy="618.30" r="1.25" fill="#111"/><circle cx="198.68" cy="618.30" r="1.25" fill="#111"/><circle cx="204.27" cy="618.30" r="1.25" fill="#111"/><circle cx="215.44" cy="618.30" r="1.25" fill="#111"/><circle cx="221.04" cy="618.30" r="1.25" fill="#111"/><circle cx="131.59" cy="600.40" r="1.1" fill="none" stroke="#222" stroke-width="0.6"/><circle cx="131.59" cy="627.30" r="1.2" fill="#111"/><circle cx="209.86" cy="627.30" r="1.2" fill="#111"/><rect x="204.82" y="626" width="0.7" height="2.6" fill="#111"/><rect x="223.83" y="596" width="5.59" height="35.6" fill="#a0b8d8" opacity="0.5"/><rect x="224.3" y="581" width="4.6" height="14.5" fill="#4a86d0"/><rect x="226" y="595" width="0.8" height="48" fill="#6f96c8"/><rect x="129" y="642.8" width="1324" height="4.2" fill="#595959"/><rect x="129" y="642.8" width="416" height="4.2" fill="#d6d6d6"/></svg>
<div class="a" style="left:1458px;top:23.5px;width:142px;height:8.5px;background:#2d2d2d;"></div>
<div class="a" style="left:1458px;top:53px;width:142px;height:0.8px;background:#1e1e1e;"></div>
<div class="a" style="left:1458px;top:77.6px;width:142px;height:0.8px;background:#1e1e1e;"></div>
<div class="a" style="left:1458px;top:97px;width:142px;height:0.8px;background:#1e1e1e;"></div>
<div class="a" style="left:1458px;top:141.8px;width:142px;height:0.8px;background:#1e1e1e;"></div>
<div class="a" style="left:1458px;top:220px;width:142px;height:0.8px;background:#1e1e1e;"></div>
<div class="a" style="left:1458px;top:234px;width:142px;height:0.8px;background:#1e1e1e;"></div>
<div class="a" style="left:1458px;top:248px;width:142px;height:0.8px;background:#1e1e1e;"></div>
<svg width="1600" height="669"><path d="M1594.3,19.8 L1594.3,22 M1596.5,19.8 L1596.5,22" stroke="#ddd" stroke-width="0.7"/><rect x="1479" y="24" width="0.6" height="8" fill="#3c3c3c"/><rect x="1508.4" y="24" width="0.6" height="8" fill="#3c3c3c"/><rect x="1527.4" y="24" width="0.6" height="8" fill="#3c3c3c"/><rect x="1547.8" y="24" width="0.6" height="8" fill="#3c3c3c"/><rect x="1570" y="24" width="0.6" height="8" fill="#3c3c3c"/><path d="M1593,26 L1598,26 M1593,28.5 L1598,28.5" stroke="#666" stroke-width="0.6"/><rect x="1557.3" y="37.2" width="24.7" height="12.8" rx="1" fill="#4d4d4d"/><rect x="1501.5" y="38" width="0.7" height="11" fill="#4a4a4a"/><rect x="1529" y="38" width="0.7" height="11" fill="#4a4a4a"/><rect x="1468.5" y="56.5" width="7.4" height="6.6" fill="none" stroke="#aaa" stroke-width="0.7"/><text x="1469.6" y="61.6" font-size="3.6" fill="#ccc" font-family="Liberation Sans">Fl</text><rect x="1467.8" y="83" width="11.2" height="10.8" rx="1.2" fill="#3a3a3a" stroke="#aaa" stroke-width="0.8"/>
<path d="M1470.5,91.5 L1470.5,87.5 Q1473.4,83.5 1476.3,87.5 L1476.3,91.5" fill="none" stroke="#eee" stroke-width="1.6"/>
<rect x="1485" y="83" width="11.2" height="10.8" rx="1.2" fill="#444" stroke="#888" stroke-width="0.8"/>
<path d="M1487.5,85.5 L1487.5,91.5 M1487.5,86.5 L1490,86.5 M1489,88.5 L1494,88.5 L1494,91.5 L1489,91.5 Z" fill="none" stroke="#ccc" stroke-width="0.8"/>
<rect x="1502" y="83" width="11.3" height="10.8" rx="1.2" fill="#222" stroke="#777" stroke-width="0.8"/>
<path d="M1505,91.5 L1505,86 L1510.5,86" fill="none" stroke="#eee" stroke-width="1.6"/>
<rect x="1518" y="83" width="10.8" height="10.8" rx="1.2" fill="#222" stroke="#555" stroke-width="0.8"/>
<rect x="1521" y="88" width="5" height="4" fill="#eee"/><path d="M1522,88 L1522,86.5 Q1523.5,84.5 1525,86.5 L1525,88" fill="none" stroke="#eee" stroke-width="0.9"/><path d="M1468.5,103.8 L1470.3,105.6 L1472.1,103.8" fill="none" stroke="#ddd" stroke-width="0.8"/><rect x="1490.3" y="113.3" width="100" height="11" rx="1" fill="#1f1f1f" stroke="#5a5a5a" stroke-width="0.7"/><path d="M1584,117.6 L1585.8,119.4 L1587.6,117.6" fill="none" stroke="#ddd" stroke-width="0.8"/><rect x="1468.8" y="126" width="121.5" height="11" rx="1" fill="#1f1f1f" stroke="#5a5a5a" stroke-width="0.7"/><path d="M1468.5,147.3 L1470.3,149.1 L1472.1,147.3" fill="none" stroke="#ddd" stroke-width="0.8"/><path d="M1498,161.5 L1502,161.5 L1502,163.5" fill="none" stroke="#999" stroke-width="0.6"/><rect x="1500.5" y="166" width="4" height="3.5" fill="#ddd"/><path d="M1501.3,166 L1501.3,165 Q1502.5,163.6 1503.7,165 L1503.7,166" fill="none" stroke="#ddd" stroke-width="0.7"/><path d="M1502.5,170 L1502.5,172" stroke="#777" stroke-width="0.6"/><rect x="1519" y="157.4" width="71.5" height="10.5" rx="1" fill="#1f1f1f" stroke="#555" stroke-width="0.7"/><rect x="1519.6" y="172.2" width="5.2" height="5.2" rx="0.8" fill="none" stroke="#bbb" stroke-width="0.7"/><rect x="1519.6" y="184.2" width="5.2" height="5.2" rx="0.8" fill="none" stroke="#bbb" stroke-width="0.7"/><rect x="1519.6" y="196.2" width="5.2" height="5.2" rx="0.8" fill="none" stroke="#bbb" stroke-width="0.7"/><rect x="1491" y="183" width="18" height="9" rx="1.5" fill="#c8fbfc"/><rect x="1468.8" y="205.5" width="121.5" height="11" rx="1" fill="#1f1f1f" stroke="#5a5a5a" stroke-width="0.7"/><path d="M1469,226.3 L1470.8,228.1 L1469,229.9" fill="none" stroke="#ddd" stroke-width="0.8"/><path d="M1469,240.3 L1470.8,242.1 L1469,243.9" fill="none" stroke="#ddd" stroke-width="0.8"/><rect x="1582.5" y="239" width="11" height="6" rx="3" fill="#d8d8d8"/><circle cx="1590.5" cy="242" r="2" fill="#222"/></svg>
<svg width="1600" height="669"><path d="M10,666 C7,664 9,660 12,659 C15,658 15,655 13,653 L17,652 C20,655 20,661 16,664 C14,666 12,667 10,666 Z" fill="#f0a040"/><circle cx="17" cy="654" r="3" fill="#e85a70"/><circle cx="17" cy="654" r="1.4" fill="#fff"/><rect x="641" y="653" width="5.2" height="5" fill="#56bff5"/><rect x="646.8" y="653" width="5.2" height="5" fill="#56bff5"/><rect x="641" y="658.6" width="5.2" height="5" fill="#56bff5"/><rect x="646.8" y="658.6" width="5.2" height="5" fill="#56bff5"/><rect x="657.8" y="651.3" width="101.6" height="14.4" rx="7.2" fill="#2d4643" stroke="#3e5754" stroke-width="0.6"/><circle cx="664.5" cy="657.8" r="2.2" fill="none" stroke="#e0e0e0" stroke-width="0.9"/><path d="M666.1,659.4 L668,661.3" stroke="#e0e0e0" stroke-width="0.9"/><circle cx="741.5" cy="658.3" r="5" fill="#b89a50"/><circle cx="741.5" cy="658.3" r="3.5" fill="#d0b060"/><path d="M748,664 L750,654 L754,654 L754,662 Z" fill="#b8b8c8"/><rect x="766" y="656" width="8" height="7" fill="#808080"/><rect x="768.5" y="653" width="9" height="7.5" fill="#e0e0e0"/><path d="M787,661 L790,653 L795,653 L792,661Z" fill="#4aa8f0"/><path d="M789,662 L793,654 L797,658 L794,664Z" fill="#e060b0"/><path d="M787,659 L790,662 L788,664Z" fill="#70d070"/><path d="M791,653 L795,653 L797,656Z" fill="#f0b040"/><rect x="808" y="653" width="12.5" height="10.5" rx="1" fill="#f2c84a"/><rect x="808" y="655.5" width="12.5" height="8" fill="#ffd95e"/><rect x="808" y="659" width="12.5" height="4.5" fill="#3a8ad8"/><rect x="812.6" y="667" width="2.6" height="1.2" rx="0.6" fill="#aaa"/><circle cx="832" cy="658.5" r="5.8" fill="#1e90d8"/><path d="M827,660 C828,655 835,653 837.5,658 C836,662 830,663 829,660 C830,657 834,657 835,659 Z" fill="#48d090"/><circle cx="832.5" cy="659" r="2" fill="#1464b0"/><path d="M846,661 C848,654 852,653 856,655 L853,658 C850,659 849,662 846,661Z" fill="#dfe8f0"/><circle cx="854" cy="656" r="2.2" fill="none" stroke="#cfe0f0" stroke-width="1"/><path d="M846,660 L851,662" stroke="#9ac0e0" stroke-width="1.5"/><rect x="868" y="655" width="11.5" height="9" rx="1" fill="#e8e8e8"/><path d="M871,655 L871,653.5 Q873.7,651 876.5,653.5 L876.5,655" fill="none" stroke="#e8e8e8" stroke-width="0.9"/><rect x="871.5" y="657.5" width="2" height="2" fill="#f25022"/><rect x="874" y="657.5" width="2" height="2" fill="#7fba00"/><rect x="871.5" y="660" width="2" height="2" fill="#00a4ef"/><rect x="874" y="660" width="2" height="2" fill="#ffb900"/><rect x="887.5" y="652.5" width="12" height="11.5" rx="1.8" fill="#00005b"/><text x="889.3" y="660.8" font-size="5.6" font-family="Liberation Sans" fill="#9999ff">Ae</text><circle cx="914.5" cy="658.5" r="5.6" fill="#ea4335"/><path d="M914.5,658.5 L909.8,661.5 A5.6,5.6 0 0 0 917.3,663.4 Z" fill="#34a853"/><path d="M914.5,658.5 L917.3,663.4 A5.6,5.6 0 0 0 920,657.5 Z" fill="#fbbc05"/><circle cx="914.5" cy="658.5" r="2.4" fill="#fff"/><circle cx="914.5" cy="658.5" r="1.8" fill="#4285f4"/><rect x="929" y="652.5" width="12" height="11.5" rx="1.8" fill="#00005b"/><text x="930.6" y="660.8" font-size="5.6" font-family="Liberation Sans" fill="#9a9aff">An</text><rect x="933.5" y="667" width="3" height="1.2" rx="0.6" fill="#aaa"/><rect x="951" y="661" width="6.5" height="8" fill="#e8e8e8"/><rect x="951" y="661" width="6.5" height="1.5" fill="#d04040"/><path d="M1472,660.5 L1474.3,658.3 L1476.6,660.5" fill="none" stroke="#d8d8f0" stroke-width="0.9"/><circle cx="1490" cy="658.8" r="4" fill="none" stroke="#c8d8f8" stroke-width="0.9" stroke-dasharray="2,1.2"/><path d="M1488,661 L1493.5,661 C1494,659 1492,658 1490.5,659 Z" fill="#4a7ad8"/><ellipse cx="1504.5" cy="659" rx="3.6" ry="2.4" fill="#e8e0e0"/><circle cx="1506.5" cy="659.5" r="2.1" fill="#c09040"/><path d="M1537,658 Q1540,655.5 1543,658 L1540,661.2 Z" fill="none" stroke="#e0e0f0" stroke-width="0.9"/><path d="M1547,657 L1549,657 L1551.5,655 L1551.5,663 L1549,661 L1547,661 Z" fill="none" stroke="#e0e0f0" stroke-width="0.8"/><path d="M1553,656.5 L1555,661 M1555,656.5 L1553,661" stroke="#e0e0f0" stroke-width="0.6"/></svg>
<div class="t" style="left:22px;top:5.6px;font-size:6.4px;color:#cfcfcf;transform:scaleX(.84);transform-origin:0 0">Animate</div>
<div class="t" style="left:59px;top:5.6px;font-size:6.4px;color:#dedede;transform:scaleX(.86);transform-origin:0 0">File</div>
<div class="t" style="left:74px;top:5.6px;font-size:6.4px;color:#dedede;transform:scaleX(.86);transform-origin:0 0">Edit</div>
<div class="t" style="left:90px;top:5.6px;font-size:6.4px;color:#dedede;transform:scaleX(.86);transform-origin:0 0">View</div>
<div class="t" style="left:108px;top:5.6px;font-size:6.4px;color:#dedede;transform:scaleX(.86);transform-origin:0 0">Insert</div>
<div class="t" style="left:128px;top:5.6px;font-size:6.4px;color:#dedede;transform:scaleX(.86);transform-origin:0 0">Modify</div>
<div class="t" style="left:152px;top:5.6px;font-size:6.4px;color:#dedede;transform:scaleX(.86);transform-origin:0 0">Text</div>
<div class="t" style="left:170px;top:5.6px;font-size:6.4px;color:#dedede;transform:scaleX(.86);transform-origin:0 0">Commands</div>
<div class="t" style="left:204px;top:5.6px;font-size:6.4px;color:#dedede;transform:scaleX(.86);transform-origin:0 0">Control</div>
<div class="t" style="left:229px;top:5.6px;font-size:6.4px;color:#dedede;transform:scaleX(.86);transform-origin:0 0">Debug</div>
<div class="t" style="left:251px;top:5.6px;font-size:6.4px;color:#dedede;transform:scaleX(.86);transform-origin:0 0">Window</div>
<div class="t" style="left:278px;top:5.6px;font-size:6.4px;color:#dedede;transform:scaleX(.86);transform-origin:0 0">Help</div>
<div class="t" style="left:28px;top:20.3px;font-size:5.8px;color:#f2f2f2;">projectfile</div>
<div class="t" style="left:57px;top:21px;font-size:5px;color:#bbb;">×</div>
<div class="t" style="left:51px;top:32.3px;font-size:5.8px;color:#f2f2f2;transform:scaleX(.9);transform-origin:0 0">Scene 1</div>
<div class="t" style="left:1419px;top:32.3px;font-size:5.4px;color:#d0d0d0;">100%</div>
<div class="t" style="left:28px;top:557.5px;font-size:5.6px;color:#e8e8e8;transform:scaleX(.8);transform-origin:0 0"><b>Timeline</b></div>
<div class="t" style="left:54px;top:557.5px;font-size:5.6px;color:#9a9a9a;transform:scaleX(.9);transform-origin:0 0">Output</div>
<div class="t" style="left:148px;top:570.5px;font-size:5.6px;color:#a8a8a8;">5.00 <span style="font-size:4px;vertical-align:top">fps</span></div>
<div class="t" style="left:179px;top:570.5px;font-size:5.6px;color:#8fb0d8;">18 <span style="font-size:4px;vertical-align:top">f</span></div>
<div class="t" style="left:152.6px;top:590.6px;font-size:4.8px;color:#a0a0a0;">5</div>
<div class="t" style="left:179.3px;top:590.6px;font-size:4.8px;color:#a0a0a0;">10</div>
<div class="t" style="left:207.3px;top:590.6px;font-size:4.8px;color:#a0a0a0;">15</div>
<div class="t" style="left:235.2px;top:590.6px;font-size:4.8px;color:#a0a0a0;">20</div>
<div class="t" style="left:263.2px;top:590.6px;font-size:4.8px;color:#a0a0a0;">25</div>
<div class="t" style="left:291.1px;top:590.6px;font-size:4.8px;color:#a0a0a0;">30</div>
<div class="t" style="left:319.1px;top:590.6px;font-size:4.8px;color:#a0a0a0;">35</div>
<div class="t" style="left:347.0px;top:590.6px;font-size:4.8px;color:#a0a0a0;">40</div>
<div class="t" style="left:375.0px;top:590.6px;font-size:4.8px;color:#a0a0a0;">45</div>
<div class="t" style="left:402.9px;top:590.6px;font-size:4.8px;color:#a0a0a0;">50</div>
<div class="t" style="left:430.9px;top:590.6px;font-size:4.8px;color:#a0a0a0;">55</div>
<div class="t" style="left:458.8px;top:590.6px;font-size:4.8px;color:#a0a0a0;">60</div>
<div class="t" style="left:486.8px;top:590.6px;font-size:4.8px;color:#a0a0a0;">65</div>
<div class="t" style="left:514.7px;top:590.6px;font-size:4.8px;color:#a0a0a0;">70</div>
<div class="t" style="left:542.7px;top:590.6px;font-size:4.8px;color:#a0a0a0;">75</div>
<div class="t" style="left:570.6px;top:590.6px;font-size:4.8px;color:#a0a0a0;">80</div>
<div class="t" style="left:598.6px;top:590.6px;font-size:4.8px;color:#a0a0a0;">85</div>
<div class="t" style="left:626.5px;top:590.6px;font-size:4.8px;color:#a0a0a0;">90</div>
<div class="t" style="left:654.5px;top:590.6px;font-size:4.8px;color:#a0a0a0;">95</div>
<div class="t" style="left:681.2px;top:590.6px;font-size:4.8px;color:#a0a0a0;">100</div>
<div class="t" style="left:709.2px;top:590.6px;font-size:4.8px;color:#a0a0a0;">105</div>
<div class="t" style="left:737.1px;top:590.6px;font-size:4.8px;color:#a0a0a0;">110</div>
<div class="t" style="left:765.1px;top:590.6px;font-size:4.8px;color:#a0a0a0;">115</div>
<div class="t" style="left:793.0px;top:590.6px;font-size:4.8px;color:#a0a0a0;">120</div>
<div class="t" style="left:821.0px;top:590.6px;font-size:4.8px;color:#a0a0a0;">125</div>
<div class="t" style="left:848.9px;top:590.6px;font-size:4.8px;color:#a0a0a0;">130</div>
<div class="t" style="left:876.9px;top:590.6px;font-size:4.8px;color:#a0a0a0;">135</div>
<div class="t" style="left:904.8px;top:590.6px;font-size:4.8px;color:#a0a0a0;">140</div>
<div class="t" style="left:932.8px;top:590.6px;font-size:4.8px;color:#a0a0a0;">145</div>
<div class="t" style="left:960.7px;top:590.6px;font-size:4.8px;color:#a0a0a0;">150</div>
<div class="t" style="left:988.7px;top:590.6px;font-size:4.8px;color:#a0a0a0;">155</div>
<div class="t" style="left:1016.6px;top:590.6px;font-size:4.8px;color:#a0a0a0;">160</div>
<div class="t" style="left:1044.6px;top:590.6px;font-size:4.8px;color:#a0a0a0;">165</div>
<div class="t" style="left:1072.5px;top:590.6px;font-size:4.8px;color:#a0a0a0;">170</div>
<div class="t" style="left:1100.5px;top:590.6px;font-size:4.8px;color:#a0a0a0;">175</div>
<div class="t" style="left:1128.4px;top:590.6px;font-size:4.8px;color:#a0a0a0;">180</div>
<div class="t" style="left:1156.4px;top:590.6px;font-size:4.8px;color:#a0a0a0;">185</div>
<div class="t" style="left:1184.3px;top:590.6px;font-size:4.8px;color:#a0a0a0;">190</div>
<div class="t" style="left:1212.3px;top:590.6px;font-size:4.8px;color:#a0a0a0;">195</div>
<div class="t" style="left:1240.2px;top:590.6px;font-size:4.8px;color:#a0a0a0;">200</div>
<div class="t" style="left:1268.2px;top:590.6px;font-size:4.8px;color:#a0a0a0;">205</div>
<div class="t" style="left:1296.1px;top:590.6px;font-size:4.8px;color:#a0a0a0;">210</div>
<div class="t" style="left:1324.1px;top:590.6px;font-size:4.8px;color:#a0a0a0;">215</div>
<div class="t" style="left:1352.0px;top:590.6px;font-size:4.8px;color:#a0a0a0;">220</div>
<div class="t" style="left:1380.0px;top:590.6px;font-size:4.8px;color:#a0a0a0;">225</div>
<div class="t" style="left:1407.9px;top:590.6px;font-size:4.8px;color:#a0a0a0;">230</div>
<div class="t" style="left:1435.9px;top:590.6px;font-size:4.8px;color:#a0a0a0;">235</div>
<div class="t" style="left:178.9px;top:582.3px;font-size:5.4px;color:#b0b0b0;">2s</div>
<div class="t" style="left:234.8px;top:582.3px;font-size:5.4px;color:#b0b0b0;">4s</div>
<div class="t" style="left:290.7px;top:582.3px;font-size:5.4px;color:#b0b0b0;">6s</div>
<div class="t" style="left:346.6px;top:582.3px;font-size:5.4px;color:#b0b0b0;">8s</div>
<div class="t" style="left:402.5px;top:582.3px;font-size:5.4px;color:#b0b0b0;">10s</div>
<div class="t" style="left:458.4px;top:582.3px;font-size:5.4px;color:#b0b0b0;">12s</div>
<div class="t" style="left:514.3px;top:582.3px;font-size:5.4px;color:#b0b0b0;">14s</div>
<div class="t" style="left:570.2px;top:582.3px;font-size:5.4px;color:#b0b0b0;">16s</div>
<div class="t" style="left:626.1px;top:582.3px;font-size:5.4px;color:#b0b0b0;">18s</div>
<div class="t" style="left:682.0px;top:582.3px;font-size:5.4px;color:#b0b0b0;">20s</div>
<div class="t" style="left:737.9px;top:582.3px;font-size:5.4px;color:#b0b0b0;">22s</div>
<div class="t" style="left:793.8px;top:582.3px;font-size:5.4px;color:#b0b0b0;">24s</div>
<div class="t" style="left:849.7px;top:582.3px;font-size:5.4px;color:#b0b0b0;">26s</div>
<div class="t" style="left:905.6px;top:582.3px;font-size:5.4px;color:#b0b0b0;">28s</div>
<div class="t" style="left:961.5px;top:582.3px;font-size:5.4px;color:#b0b0b0;">30s</div>
<div class="t" style="left:1017.4px;top:582.3px;font-size:5.4px;color:#b0b0b0;">32s</div>
<div class="t" style="left:1073.3px;top:582.3px;font-size:5.4px;color:#b0b0b0;">34s</div>
<div class="t" style="left:1129.2px;top:582.3px;font-size:5.4px;color:#b0b0b0;">36s</div>
<div class="t" style="left:1185.1px;top:582.3px;font-size:5.4px;color:#b0b0b0;">38s</div>
<div class="t" style="left:1241.0px;top:582.3px;font-size:5.4px;color:#b0b0b0;">40s</div>
<div class="t" style="left:1296.9px;top:582.3px;font-size:5.4px;color:#b0b0b0;">42s</div>
<div class="t" style="left:1352.8px;top:582.3px;font-size:5.4px;color:#b0b0b0;">44s</div>
<div class="t" style="left:1408.7px;top:582.3px;font-size:5.4px;color:#b0b0b0;">46s</div>
<div class="t" style="left:49px;top:597.5px;font-size:5.8px;color:#f0f0f0;transform:scaleX(.82);transform-origin:0 0">arrows</div>
<div class="t" style="left:49px;top:606.4px;font-size:5.8px;color:#d0d0d0;transform:scaleX(.82);transform-origin:0 0">longboats</div>
<div class="t" style="left:49px;top:615.4px;font-size:5.8px;color:#d0d0d0;transform:scaleX(.82);transform-origin:0 0">waves</div>
<div class="t" style="left:49px;top:624.4px;font-size:5.8px;color:#d0d0d0;transform:scaleX(.82);transform-origin:0 0">mountains</div>
<div class="t" style="left:1462px;top:25.8px;font-size:4.6px;color:#8a8a8a;"><i>Assets</i></div>
<div class="t" style="left:1482px;top:25.6px;font-size:4.9px;color:#f0f0f0;"><b>Properties</b></div>
<div class="t" style="left:1512px;top:25.8px;font-size:4.6px;color:#8a8a8a;">Color</div>
<div class="t" style="left:1532px;top:25.8px;font-size:4.6px;color:#8a8a8a;">Align</div>
<div class="t" style="left:1551px;top:25.8px;font-size:4.6px;color:#8a8a8a;">Library</div>
<div class="t" style="left:1484px;top:41.3px;font-size:5.4px;color:#8a8a8a;">Tool</div>
<div class="t" style="left:1508px;top:41.3px;font-size:5.4px;color:#8a8a8a;">Object</div>
<div class="t" style="left:1535.5px;top:41.3px;font-size:5.4px;color:#8a8a8a;">Frame</div>
<div class="t" style="left:1565px;top:41.3px;font-size:5.6px;color:#f4f4f4;"><b>Doc</b></div>
<div class="t" style="left:1486px;top:57.8px;font-size:5.4px;color:#e0e0e0;">projectfile</div>
<div class="t" style="left:1486.6px;top:67.8px;font-size:5.4px;color:#e0e0e0;">Document</div>
<div class="t" style="left:1478px;top:102.6px;font-size:5.2px;color:#e8e8e8;"><b>Publish Settings</b></div>
<div class="t" style="left:1468.5px;top:116.6px;font-size:5.4px;color:#d0d0d0;">Profile</div>
<div class="t" style="left:1494px;top:116.6px;font-size:5.2px;color:#d0d0d0;">Default</div>
<div class="t" style="left:1514px;top:129.2px;font-size:5.2px;color:#e0e0e0;">More settings</div>
<div class="t" style="left:1478px;top:146.4px;font-size:5.2px;color:#e8e8e8;"><b>Document Settings</b></div>
<div class="t" style="left:1468.7px;top:160.6px;font-size:4.6px;color:#aaa;">W</div>
<div class="t" style="left:1480px;top:160.4px;font-size:5.2px;color:#6c9ad0;">1050</div>
<div class="t" style="left:1469px;top:171.6px;font-size:4.6px;color:#aaa;">H</div>
<div class="t" style="left:1478.5px;top:171.4px;font-size:5.2px;color:#6c9ad0;">580</div>
<div class="t" style="left:1537.5px;top:160.5px;font-size:5.2px;color:#e0e0e0;">Match contents</div>
<div class="t" style="left:1529px;top:172.6px;font-size:5.2px;color:#d0d0d0;">Scale Content</div>
<div class="t" style="left:1529px;top:184.6px;font-size:5.2px;color:#d0d0d0;">Apply to pasteboard</div>
<div class="t" style="left:1529px;top:196.6px;font-size:5.2px;color:#d0d0d0;">Scale Spans</div>
<div class="t" style="left:1468.5px;top:185.8px;font-size:5.2px;color:#c8c8c8;">Stage</div>
<div class="t" style="left:1468.5px;top:195.8px;font-size:5.2px;color:#c8c8c8;">FPS</div>
<div class="t" style="left:1492.5px;top:195.6px;font-size:5.2px;color:#6c9ad0;">5</div>
<div class="t" style="left:1514px;top:208.8px;font-size:5.2px;color:#e0e0e0;">More settings</div>
<div class="t" style="left:1478px;top:225.6px;font-size:5.2px;color:#e0e0e0;"><b>SWF History</b></div>
<div class="t" style="left:1478px;top:239.6px;font-size:5.2px;color:#e0e0e0;"><b>Accessibility</b></div>
<div class="t" style="left:23.5px;top:651.4px;font-size:5.4px;color:#e8e8e8;">5°C</div>
<div class="t" style="left:23.5px;top:659.6px;font-size:5.4px;color:#c8c8c8;">Clear</div>
<div class="t" style="left:674.5px;top:655.5px;font-size:6px;color:#d8d8d8;">Search</div>
<div class="t" style="left:1517.5px;top:651.5px;font-size:4.8px;color:#e8e8f0;">ENG</div>
<div class="t" style="left:1518.5px;top:659.6px;font-size:4.8px;color:#e8e8f0;">UK</div>
<div class="t" style="left:1579px;top:651.5px;font-size:5px;color:#f0f0f0;">20:10</div>
<div class="t" style="left:1563px;top:659.6px;font-size:5.4px;color:#e0e0e8;transform:scaleX(1.02);transform-origin:0 0">10/12/2025</div>
</body></html>
